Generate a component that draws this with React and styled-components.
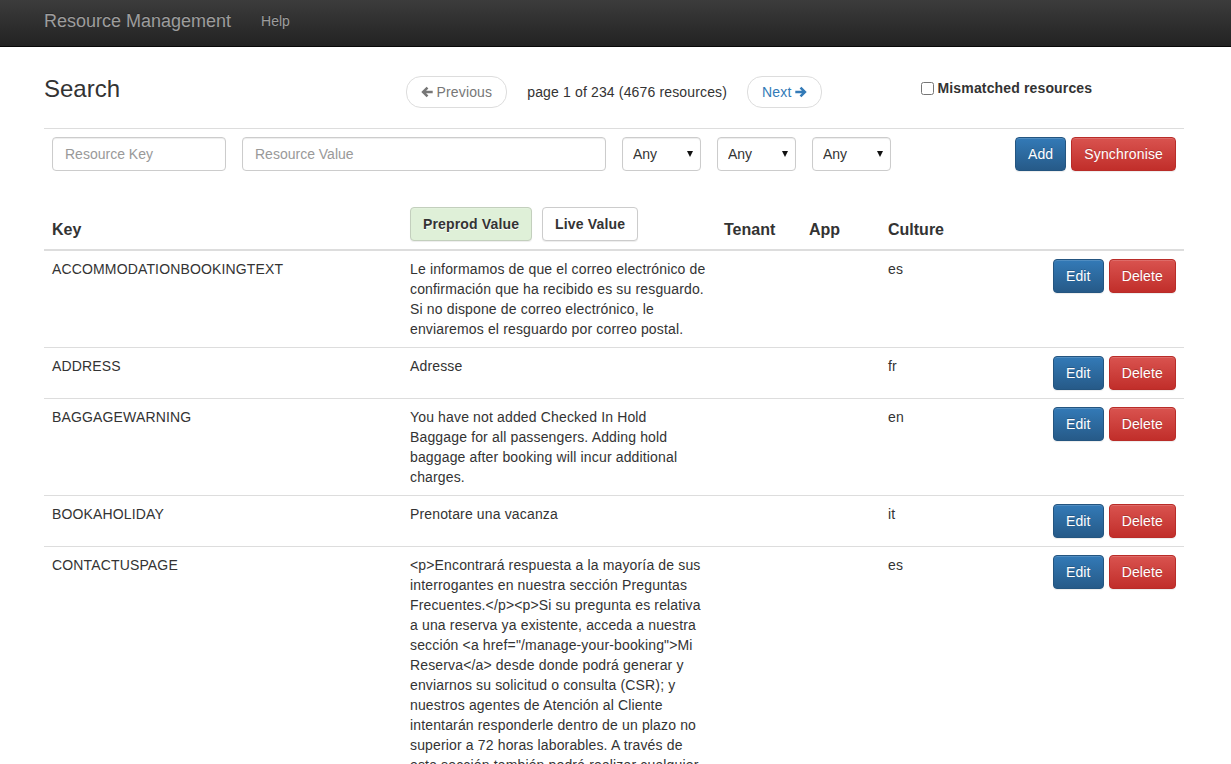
import React from "react";
import styled, { createGlobalStyle } from "styled-components";

const Global = createGlobalStyle`
  html, body { margin: 0; padding: 0; background: #fff; }
  body {
    font-family: "Liberation Sans", Arial, Helvetica, sans-serif;
    font-size: 14px;
    line-height: 20px;
    letter-spacing: 0.15px;
    color: #333;
  }
  * { box-sizing: border-box; }
`;

const Navbar = styled.nav`
  height: 47px;
  background-image: linear-gradient(to bottom, #3c3c3c 0%, #222 100%);
  border-bottom: 1px solid #080808;
  letter-spacing: 0;
`;

const NavInner = styled.div`
  width: 1140px;
  margin-left: 44px;
  height: 46px;
  display: flex;
  align-items: center;
`;

const Brand = styled.a`
  font-size: 18px;
  color: #9d9d9d;
  text-decoration: none;
  padding-right: 15px;
  text-shadow: 0 -1px 0 rgba(0, 0, 0, 0.25);
  margin-top: -4px;
`;

const NavLink = styled.a`
  font-size: 14px;
  color: #9d9d9d;
  text-decoration: none;
  padding: 0 15px;
  text-shadow: 0 -1px 0 rgba(0, 0, 0, 0.25);
  margin-top: -4px;
`;

const Container = styled.main`
  width: 1140px;
  margin-left: 44px;
`;

const HeaderRow = styled.div`
  display: grid;
  grid-template-columns: 1fr 417px 1fr;
  align-items: start;
  margin-top: 29px;
`;

const Title = styled.h3`
  margin: 0;
  font-size: 24px;
  font-weight: 500;
  line-height: 26px;
  letter-spacing: 0;
  color: #333;
`;

const Pager = styled.div`
  display: flex;
  align-items: center;
  justify-content: space-between;
`;

const PagerButton = styled.a`
  display: inline-flex;
  align-items: center;
  gap: 4px;
  height: 32px;
  padding: 0 14px;
  border: 1px solid #ddd;
  border-radius: 15px;
  background: #fff;
  color: ${(p) => (p.$disabled ? "#777" : "#337ab7")};
  text-decoration: none;
  cursor: ${(p) => (p.$disabled ? "not-allowed" : "pointer")};
`;

const PageInfo = styled.span`
  color: #333;
`;

const CheckCol = styled.div`
  padding-left: 98px;
  padding-top: 2px;
`;

const CheckLabel = styled.label`
  display: inline-flex;
  align-items: center;
  gap: 4px;
  font-weight: bold;
  color: #333;
`;

const CheckBox = styled.input`
  width: 13px;
  height: 13px;
  margin: 0;
`;

const Rule = styled.hr`
  margin: 20px 0 0;
  border: 0;
  border-top: 1px solid #ddd;
`;

const FilterRow = styled.div`
  display: flex;
  align-items: center;
  gap: 16px;
  padding: 0 8px;
  margin-top: 8px;
`;

const TextInput = styled.input`
  width: ${(p) => p.$w}px;
  height: 34px;
  padding: 6px 12px;
  font: inherit;
  font-size: 14px;
  color: #555;
  border: 1px solid #ccc;
  border-radius: 4px;
  box-shadow: inset 0 1px 1px rgba(0, 0, 0, 0.075);
  &::placeholder { color: #999; }
`;

const SelectWrap = styled.div`
  position: relative;
  width: 79px;
  height: 34px;
  &::after {
    content: "";
    position: absolute;
    right: 8px;
    top: 14px;
    border-left: 3px solid transparent;
    border-right: 3px solid transparent;
    border-top: 6px solid #111;
    pointer-events: none;
  }
`;

const Select = styled.select`
  appearance: none;
  width: 100%;
  height: 34px;
  padding: 6px 10px;
  font: inherit;
  font-size: 14px;
  color: #333;
  background: #fff;
  border: 1px solid #ccc;
  border-radius: 4px;
  box-shadow: inset 0 1px 1px rgba(0, 0, 0, 0.075);
`;

const ActionGroup = styled.div`
  margin-left: auto;
  display: flex;
  gap: 5px;
`;

const variants = {
  primary: {
    bg: "linear-gradient(to bottom, #337ab7 0%, #265a88 100%)",
    border: "#245580",
    color: "#fff",
    shadow: "0 -1px 0 rgba(0,0,0,0.2)",
  },
  danger: {
    bg: "linear-gradient(to bottom, #d9534f 0%, #c12e2a 100%)",
    border: "#b92c28",
    color: "#fff",
    shadow: "0 -1px 0 rgba(0,0,0,0.2)",
  },
  success: {
    bg: "#dff0d8",
    border: "#c3cfbd",
    color: "#333",
    shadow: "0 1px 0 #fff",
  },
  plain: {
    bg: "#fff",
    border: "#ccc",
    color: "#333",
    shadow: "0 1px 0 #fff",
  },
};

const Button = styled.button`
  height: 34px;
  padding: 6px 12px;
  font-family: inherit;
  font-size: 14px;
  line-height: 20px;
  letter-spacing: 0.15px;
  font-weight: ${(p) => (p.$bold ? "bold" : "normal")};
  color: ${(p) => variants[p.$v].color};
  background: ${(p) => variants[p.$v].bg};
  border: 1px solid ${(p) => variants[p.$v].border};
  border-radius: 4px;
  text-shadow: ${(p) => variants[p.$v].shadow};
  box-shadow: inset 0 1px 0 rgba(255, 255, 255, 0.15), 0 1px 1px rgba(0, 0, 0, 0.075);
  cursor: pointer;
  white-space: nowrap;
`;

const Table = styled.table`
  width: 1140px;
  margin-top: 28px;
  border-collapse: collapse;
  table-layout: fixed;
`;

const Th = styled.th`
  padding: 8px 8px ${(p) => (p.$tight ? 8 : 10)}px;
  text-align: left;
  vertical-align: bottom;
  font-size: 16px;
  font-weight: bold;
  line-height: 18px;
  letter-spacing: 0;
  color: #333;
  border-bottom: 2px solid #ddd;
`;

const HeadButtons = styled.div`
  display: flex;
  gap: 10px;
`;

const Td = styled.td`
  padding: 8px ${(p) => (p.$wrap ? 9 : 8)}px 8px 8px;
  vertical-align: top;
  line-height: 20px;
  border-top: 1px solid #ddd;
  text-align: ${(p) => (p.$right ? "right" : "left")};
  word-wrap: break-word;
`;

const RowActions = styled.div`
  display: flex;
  justify-content: flex-end;
  gap: 5px;
`;

const Arrow = ({ dir }) => (
  <svg width="12" height="12" viewBox="0 0 12 12" aria-hidden="true"
    style={{ transform: dir === "right" ? "scaleX(-1)" : undefined }}>
    <path d="M0.3 6 L5.6 0.7 L7.4 2.5 L5.1 4.7 H11.7 V7.3 H5.1 L7.4 9.5 L5.6 11.3 Z" fill="currentColor" />
  </svg>
);

const rows = [
  {
    key: "ACCOMMODATIONBOOKINGTEXT",
    value:
      "Le informamos de que el correo electrónico de confirmación que ha recibido es su resguardo. Si no dispone de correo electrónico, le enviaremos el resguardo por correo postal.",
    culture: "es",
  },
  { key: "ADDRESS", value: "Adresse", culture: "fr" },
  {
    key: "BAGGAGEWARNING",
    value:
      "You have not added Checked In Hold Baggage for all passengers. Adding hold baggage after booking will incur additional charges.",
    culture: "en",
  },
  { key: "BOOKAHOLIDAY", value: "Prenotare una vacanza", culture: "it" },
  {
    key: "CONTACTUSPAGE",
    value:
      '<p>Encontrará respuesta a la mayoría de sus interrogantes en nuestra sección Preguntas Frecuentes.</p><p>Si su pregunta es relativa a una reserva ya existente, acceda a nuestra sección <a href="/manage-your-booking">Mi Reserva</a> desde donde podrá generar y enviarnos su solicitud o consulta (CSR); y nuestros agentes de Atención al Cliente intentarán responderle dentro de un plazo no superior a 72 horas laborables. A través de esta sección también podrá realizar cualquier modificación en su reserva.</p>',
    culture: "es",
  },
];

export default function App() {
  return (
    <>
      <Global />
      <Navbar>
        <NavInner>
          <Brand href="#">Resource Management</Brand>
          <NavLink href="#">Help</NavLink>
        </NavInner>
      </Navbar>
      <Container>
        <HeaderRow>
          <Title>Search</Title>
          <Pager>
            <PagerButton $disabled>
              <Arrow dir="left" /> Previous
            </PagerButton>
            <PageInfo>page 1 of 234 (4676 resources)</PageInfo>
            <PagerButton href="#">
              Next <Arrow dir="right" />
            </PagerButton>
          </Pager>
          <CheckCol>
            <CheckLabel>
              <CheckBox type="checkbox" /> Mismatched resources
            </CheckLabel>
          </CheckCol>
        </HeaderRow>
        <Rule />
        <FilterRow>
          <TextInput $w={174} placeholder="Resource Key" />
          <TextInput $w={364} placeholder="Resource Value" />
          {[0, 1, 2].map((i) => (
            <SelectWrap key={i}>
              <Select defaultValue="any">
                <option value="any">Any</option>
              </Select>
            </SelectWrap>
          ))}
          <ActionGroup>
            <Button $v="primary">Add</Button>
            <Button $v="danger">Synchronise</Button>
          </ActionGroup>
        </FilterRow>
        <Table>
          <colgroup>
            <col style={{ width: 358 }} />
            <col style={{ width: 314 }} />
            <col style={{ width: 85 }} />
            <col style={{ width: 79 }} />
            <col style={{ width: 120 }} />
            <col />
          </colgroup>
          <thead>
            <tr>
              <Th>Key</Th>
              <Th $tight>
                <HeadButtons>
                  <Button $v="success" $bold>Preprod Value</Button>
                  <Button $v="plain" $bold>Live Value</Button>
                </HeadButtons>
              </Th>
              <Th>Tenant</Th>
              <Th>App</Th>
              <Th>Culture</Th>
              <Th />
            </tr>
          </thead>
          <tbody>
            {rows.map((r) => (
              <tr key={r.key}>
                <Td>{r.key}</Td>
                <Td $wrap>{r.value}</Td>
                <Td />
                <Td />
                <Td>{r.culture}</Td>
                <Td $right>
                  <RowActions>
                    <Button $v="primary">Edit</Button>
                    <Button $v="danger">Delete</Button>
                  </RowActions>
                </Td>
              </tr>
            ))}
          </tbody>
        </Table>
      </Container>
    </>
  );
}
